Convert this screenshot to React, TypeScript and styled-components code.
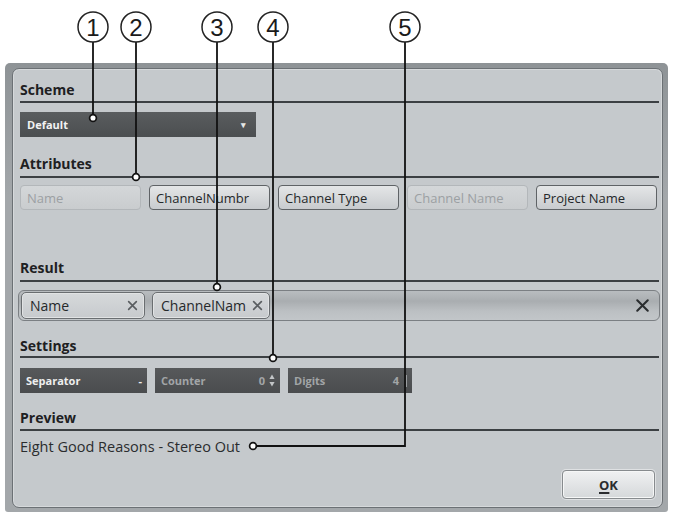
import { Fragment } from 'react';
import styled, { createGlobalStyle } from 'styled-components';

const GlobalStyle = createGlobalStyle`
  body {
    margin: 0;
    background: #ffffff;
    font-family: 'Open Sans', 'Noto Sans', sans-serif;
  }
`;

const attributes = [
  { label: 'Name', enabled: false },
  { label: 'ChannelNumbr', enabled: true },
  { label: 'Channel Type', enabled: true },
  { label: 'Channel Name', enabled: false },
  { label: 'Project Name', enabled: true },
];

const callouts = [
  { n: 1, x: 93, to: 118 },
  { n: 2, x: 136, to: 177 },
  { n: 3, x: 217, to: 287 },
  { n: 4, x: 273, to: 358 },
];

const Callouts = () => (
  <Overlay width='673' height='515' viewBox='0 0 673 515'>
    {callouts.map((c) => (
      <g key={c.n}>
        <line x1={c.x} y1={42} x2={c.x} y2={c.to} stroke='#111' strokeWidth='1.8' />
        <circle cx={c.x} cy={27} r={15} fill='#fff' stroke='#222' strokeWidth='1.5' />
        <CalloutNum x={c.x} y={35.5}>
          {c.n}
        </CalloutNum>
        <circle cx={c.x} cy={c.to} r={3.4} fill='#fff' stroke='#111' strokeWidth='1.7' />
      </g>
    ))}
    <polyline points='405,42 405,446 253,446' fill='none' stroke='#111' strokeWidth='1.8' />
    <circle cx={405} cy={27} r={15} fill='#fff' stroke='#222' strokeWidth='1.5' />
    <CalloutNum x={405} y={35.5}>
      5
    </CalloutNum>
    <circle cx={253} cy={446} r={3.4} fill='#fff' stroke='#111' strokeWidth='1.7' />
  </Overlay>
);

const Cross = ({ size, weight, color }: { size: number; weight: number; color: string }) => (
  <svg width={size} height={size} viewBox='0 0 10 10'>
    <path d='M1.5 1.5 L8.5 8.5 M8.5 1.5 L1.5 8.5' stroke={color} strokeWidth={weight} strokeLinecap='round' />
  </svg>
);

const Spinner = () => (
  <svg width='6' height='13' viewBox='0 0 6 13'>
    <path d='M3 0.5 L5.6 5 L0.4 5 Z' fill='#c2c5c7' />
    <path d='M3 12.5 L5.6 8 L0.4 8 Z' fill='#c2c5c7' />
  </svg>
);

const App = () => {
  return (
    <Fragment>
      <GlobalStyle />
      <Page>
        <Frame>
          <Panel>
            <SectionHeader $top={0} $pad={3}>
              Scheme
            </SectionHeader>
            <Dropdown>
              <span>Default</span>
              <Caret>▾</Caret>
            </Dropdown>

            <SectionHeader $top={19} $pad={4}>
              Attributes
            </SectionHeader>
            <ButtonRow>
              {attributes.map((a) => (
                <AttrButton key={a.label} $enabled={a.enabled}>
                  {a.label}
                </AttrButton>
              ))}
            </ButtonRow>

            <SectionHeader $top={50} $pad={4}>
              Result
            </SectionHeader>
            <ResultField>
              <Tag $w={124}>
                Name
                <Cross size={11} weight={1.5} color='#5a5e61' />
              </Tag>
              <Tag $w={118}>
                ChannelNam
                <Cross size={11} weight={1.5} color='#5a5e61' />
              </Tag>
              <ClearX>
                <Cross size={15} weight={1.4} color='#2a2d2f' />
              </ClearX>
            </ResultField>

            <SectionHeader $top={17} $pad={2}>
              Settings
            </SectionHeader>
            <SettingsRow>
              <DarkField $w={127} $active>
                <span>Separator</span>
                <span>-</span>
              </DarkField>
              <DarkField $w={125}>
                <span>Counter</span>
                <Value>
                  0
                  <Spinner />
                </Value>
              </DarkField>
              <DarkField $w={124}>
                <span>Digits</span>
                <Value>
                  4<Tick />
                </Value>
              </DarkField>
            </SettingsRow>

            <SectionHeader $top={17} $pad={3}>
              Preview
            </SectionHeader>
            <PreviewText>Eight Good Reasons - Stereo Out</PreviewText>

            <Footer>
              <OkButton>
                <u>O</u>K
              </OkButton>
            </Footer>
          </Panel>
        </Frame>
        <Callouts />
      </Page>
    </Fragment>
  );
};

const Page = styled.div`
  position: relative;
  width: 673px;
  height: 515px;
  box-sizing: border-box;
  padding: 63px 5px 0 5px;
  overflow: hidden;
`;

const Frame = styled.div`
  width: 663px;
  height: 449px;
  box-sizing: border-box;
  padding: 5px 5px 4px 7px;
  background: linear-gradient(#8e9396, #a3a7aa 30%, #a3a7aa);
  border-radius: 5px 5px 3px 3px;
`;

const Panel = styled.div`
  height: 100%;
  box-sizing: border-box;
  display: flex;
  flex-direction: column;
  padding: 13px 3px 0 7px;
  background: #c5c9cc;
  border: 1px solid #6c7175;
  border-radius: 7px;
  box-shadow: inset 0 0 0 1px #d6d9db;
`;

const SectionHeader = styled.div<{ $top: number; $pad: number }>`
  margin-top: ${({ $top }) => $top}px;
  padding-bottom: ${({ $pad }) => $pad}px;
  font-size: 14px;
  line-height: 16px;
  font-weight: 700;
  color: #1e2022;
  border-bottom: 2px solid #3c4043;
`;

const Dropdown = styled.div`
  margin-top: 9px;
  width: 236px;
  height: 25px;
  box-sizing: border-box;
  display: flex;
  align-items: center;
  justify-content: space-between;
  padding: 0 10px 0 7px;
  background: linear-gradient(#5a5d5f, #4b4e50);
  color: #f2f2f2;
  font-size: 11px;
  font-weight: 700;
`;

const Caret = styled.span`
  font-size: 9px;
  color: #e6e6e6;
`;

const ButtonRow = styled.div`
  margin-top: 7px;
  display: flex;
  gap: 8px;
`;

const AttrButton = styled.div<{ $enabled: boolean }>`
  width: 121px;
  height: 25px;
  box-sizing: border-box;
  display: flex;
  align-items: center;
  padding-left: 6px;
  font-size: 13px;
  border-radius: 4px;
  color: ${({ $enabled }) => ($enabled ? '#25282a' : '#9ca0a3')};
  border: ${({ $enabled }) => ($enabled ? '1.5px solid #5f6366' : '1px solid #b3b7ba')};
  background: ${({ $enabled }) =>
    $enabled ? 'linear-gradient(#e4e6e7, #c8cbce)' : 'linear-gradient(#d4d7d9, #c9ccce)'};
`;

const ResultField = styled.div`
  margin: 8px -1px 0 -2px;
  height: 31px;
  box-sizing: border-box;
  display: flex;
  align-items: center;
  gap: 7px;
  padding: 0 9px 0 2px;
  border: 1px solid #7b7f83;
  border-radius: 6px;
  background: linear-gradient(#b9bdc0, #a9adb0 35%, #bcc0c3 70%, #c2c6c9);
`;

const Tag = styled.div<{ $w: number }>`
  width: ${({ $w }) => $w}px;
  height: 27px;
  box-sizing: border-box;
  display: flex;
  align-items: center;
  justify-content: space-between;
  padding: 0 6px 0 8px;
  font-size: 14px;
  color: #26292b;
  background: linear-gradient(#d6d9db, #c7cacd);
  border: 1.5px solid #6a6e71;
  border-radius: 5px;
  box-shadow: inset 0 0 0 1px #e1e3e4;
`;

const ClearX = styled.span`
  margin-left: auto;
  display: flex;
`;

const SettingsRow = styled.div`
  margin-top: 10px;
  display: flex;
  gap: 8px;
`;

const DarkField = styled.div<{ $w: number; $active?: boolean }>`
  width: ${({ $w }) => $w}px;
  height: 25px;
  box-sizing: border-box;
  display: flex;
  align-items: center;
  justify-content: space-between;
  padding: 0 5px 0 6px;
  font-size: 11px;
  font-weight: 700;
  background: linear-gradient(#57595b, #4a4c4e);
  color: ${({ $active }) => ($active ? '#eeeeee' : '#a2a5a7')};
`;

const Value = styled.span`
  display: flex;
  align-items: center;
  gap: 4px;
`;

const Tick = styled.span`
  width: 1px;
  height: 12px;
  margin-left: 3px;
  background: #9a9da0;
`;

const PreviewText = styled.div`
  margin-top: 8px;
  font-size: 14.5px;
  line-height: 16px;
  color: #2a2c2e;
`;

const Footer = styled.div`
  margin-top: 15px;
  display: flex;
  justify-content: flex-end;
  padding-right: 4px;
`;

const OkButton = styled.div`
  width: 93px;
  height: 29px;
  box-sizing: border-box;
  display: flex;
  align-items: center;
  justify-content: center;
  font-size: 13px;
  font-weight: 700;
  color: #2a2c2e;
  border: 1px solid #878b8e;
  border-radius: 4px;
  background: linear-gradient(#f0f1f2, #d5d8da);
  box-shadow: 0 0 0 1px #dfe1e3, inset 0 0 0 1px #f6f7f7;

  u {
    text-decoration-thickness: 2px;
    text-underline-offset: 2px;
  }
`;

const Overlay = styled.svg`
  position: absolute;
  left: 0;
  top: 0;
  pointer-events: none;
`;

const CalloutNum = styled.text`
  font-family: 'Liberation Sans', Arial, sans-serif;
  font-size: 24px;
  fill: #1a1a1a;
  text-anchor: middle;
`;

export default App;
